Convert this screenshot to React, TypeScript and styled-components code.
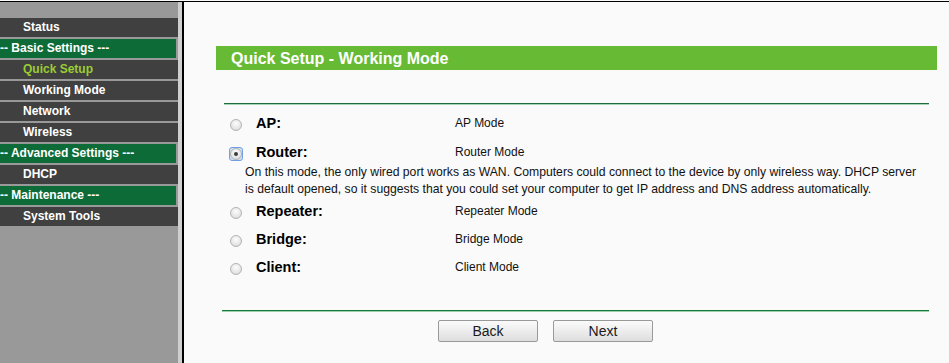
import React from 'react';
import styled, { createGlobalStyle } from 'styled-components';

const GlobalStyle = createGlobalStyle`
    html, body {
        margin: 0;
        padding: 0;
        background: #fafafa;
        font-family: "Liberation Sans", Arial, sans-serif;
    }
`

const Frame = styled.div`
    display: flex;
    margin-top: 1px;
    border-top: 1px solid #000;
    height: 361px;
`

const Sidebar = styled.div`
    width: 178px;
    background: #999;
    padding-top: 16px;
    border-right: 4px solid #cfcfcf;
    flex-shrink: 0;
`

const Divider = styled.div`
    width: 2px;
    background: #000;
    flex-shrink: 0;
`

const MenuItem = styled.div<{ $active?: boolean }>`
    height: 19px;
    line-height: 19px;
    margin-bottom: 2px;
    padding-left: 23px;
    background: #404040;
    color: ${p => p.$active ? '#9acd32' : '#fff'};
    font-size: 12px;
    font-weight: bold;
    white-space: nowrap;
`

const MenuGroup = styled.div`
    width: 176px;
    height: 19px;
    line-height: 19px;
    margin-bottom: 2px;
    background: #0d6b38;
    color: #fff;
    font-size: 12px;
    font-weight: bold;
    white-space: nowrap;
`

const Content = styled.div`
    flex: 1;
    background: #fafafa;
    padding-top: 44px;
`

const TitleBar = styled.div`
    margin-left: 32px;
    width: 706px;
    height: 24px;
    line-height: 25px;
    padding-left: 15px;
    background: #67ba34;
    color: #fff;
    font-size: 16px;
    font-weight: bold;
`

const Form = styled.div`
    margin-left: 38px;
    width: 707px;
    margin-top: 33px;
`

const TopRule = styled.div`
    margin-left: 2px;
    height: 1px;
    background: #1f6b3d;
    border-bottom: 1px solid #a6d3b5;
    margin-bottom: 4px;
`

const BottomRule = styled.div`
    height: 1px;
    background: #17793a;
    border-bottom: 1px solid #9ccfac;
    margin-top: 29px;
`

const ModeRow = styled.div<{ $gap?: number }>`
    display: flex;
    align-items: center;
    height: 28px;
    margin-top: ${p => p.$gap || 0}px;
`

const RadioCell = styled.div`
    width: 34px;
    display: flex;
    align-items: center;
    padding-top: 3px;
`

const RadioFocus = styled.span<{ $focus?: boolean }>`
    display: inline-flex;
    align-items: center;
    justify-content: center;
    width: 14px;
    height: 14px;
    margin-left: 7px;
    border-radius: 3px;
    box-sizing: border-box;
    border: 1px solid ${p => p.$focus ? '#6f9fe2' : 'transparent'};
    background: ${p => p.$focus ? '#cfe1f7' : 'transparent'};
`

const RadioDot = styled.span<{ $checked?: boolean }>`
    display: inline-flex;
    align-items: center;
    justify-content: center;
    width: 12px;
    height: 12px;
    box-sizing: border-box;
    border-radius: 50%;
    border: 1px solid #b3b3b3;
    background: radial-gradient(circle at 50% 35%, #fdfdfd 0%, #e6e6e6 60%, #d4d4d4 100%);

    &::after {
        content: '';
        display: ${p => p.$checked ? 'block' : 'none'};
        width: 4px;
        height: 4px;
        border-radius: 50%;
        background: #3c3c3c;
    }
`

const ModeLabel = styled.div`
    width: 199px;
    font-size: 14.5px;
    font-weight: bold;
    color: #000;
`

const ModeValue = styled.div`
    font-size: 12px;
    color: #111;
`

const Description = styled.div`
    margin: -2px 0 -1px 23px;
    font-size: 12.2px;
    line-height: 17px;
    color: #111;
    white-space: nowrap;
`

const ButtonBar = styled.div`
    display: flex;
    gap: 15px;
    padding-left: 216px;
    margin-top: 8px;
`

const FormButton = styled.button`
    width: 100px;
    height: 22px;
    padding: 0;
    border: 1px solid #9a9a9a;
    border-radius: 2px;
    background: linear-gradient(#fbfbfb, #dedede);
    font-family: "Liberation Sans", Arial, sans-serif;
    font-size: 14px;
    color: #1a1a1a;
`

const menu = [
    { label: 'Status' },
    { label: '-- Basic Settings ---', group: true },
    { label: 'Quick Setup', active: true },
    { label: 'Working Mode' },
    { label: 'Network' },
    { label: 'Wireless' },
    { label: '-- Advanced Settings ---', group: true },
    { label: 'DHCP' },
    { label: '-- Maintenance ---', group: true },
    { label: 'System Tools' },
]

const modes = [
    { name: 'AP:', value: 'AP Mode' },
    { name: 'Router:', value: 'Router Mode', checked: true },
    { name: 'Repeater:', value: 'Repeater Mode' },
    { name: 'Bridge:', value: 'Bridge Mode' },
    { name: 'Client:', value: 'Client Mode' },
]

export default function App() {
    return (
        <>
            <GlobalStyle />
            <Frame>
                <Sidebar>
                    {menu.map((item, i) =>
                        item.group
                            ? <MenuGroup key={i}>{item.label}</MenuGroup>
                            : <MenuItem key={i} $active={item.active}>{item.label}</MenuItem>
                    )}
                </Sidebar>
                <Divider />
                <Content>
                    <TitleBar>Quick Setup - Working Mode</TitleBar>
                    <Form>
                        <TopRule />
                        {modes.map((mode, i) => (
                            <React.Fragment key={mode.name}>
                                <ModeRow $gap={i === 1 ? 1 : 0}>
                                    <RadioCell>
                                        <RadioFocus $focus={mode.checked}>
                                            <RadioDot $checked={mode.checked} />
                                        </RadioFocus>
                                    </RadioCell>
                                    <ModeLabel>{mode.name}</ModeLabel>
                                    <ModeValue>{mode.value}</ModeValue>
                                </ModeRow>
                                {mode.checked &&
                                <Description>
                                    On this mode, the only wired port works as WAN. Computers could connect to the device by only wireless way. DHCP server<br />
                                    is default opened, so it suggests that you could set your computer to get IP address and DNS address automatically.
                                </Description>
                                }
                            </React.Fragment>
                        ))}
                        <BottomRule />
                        <ButtonBar>
                            <FormButton>Back</FormButton>
                            <FormButton>Next</FormButton>
                        </ButtonBar>
                    </Form>
                </Content>
            </Frame>
        </>
    );
}
